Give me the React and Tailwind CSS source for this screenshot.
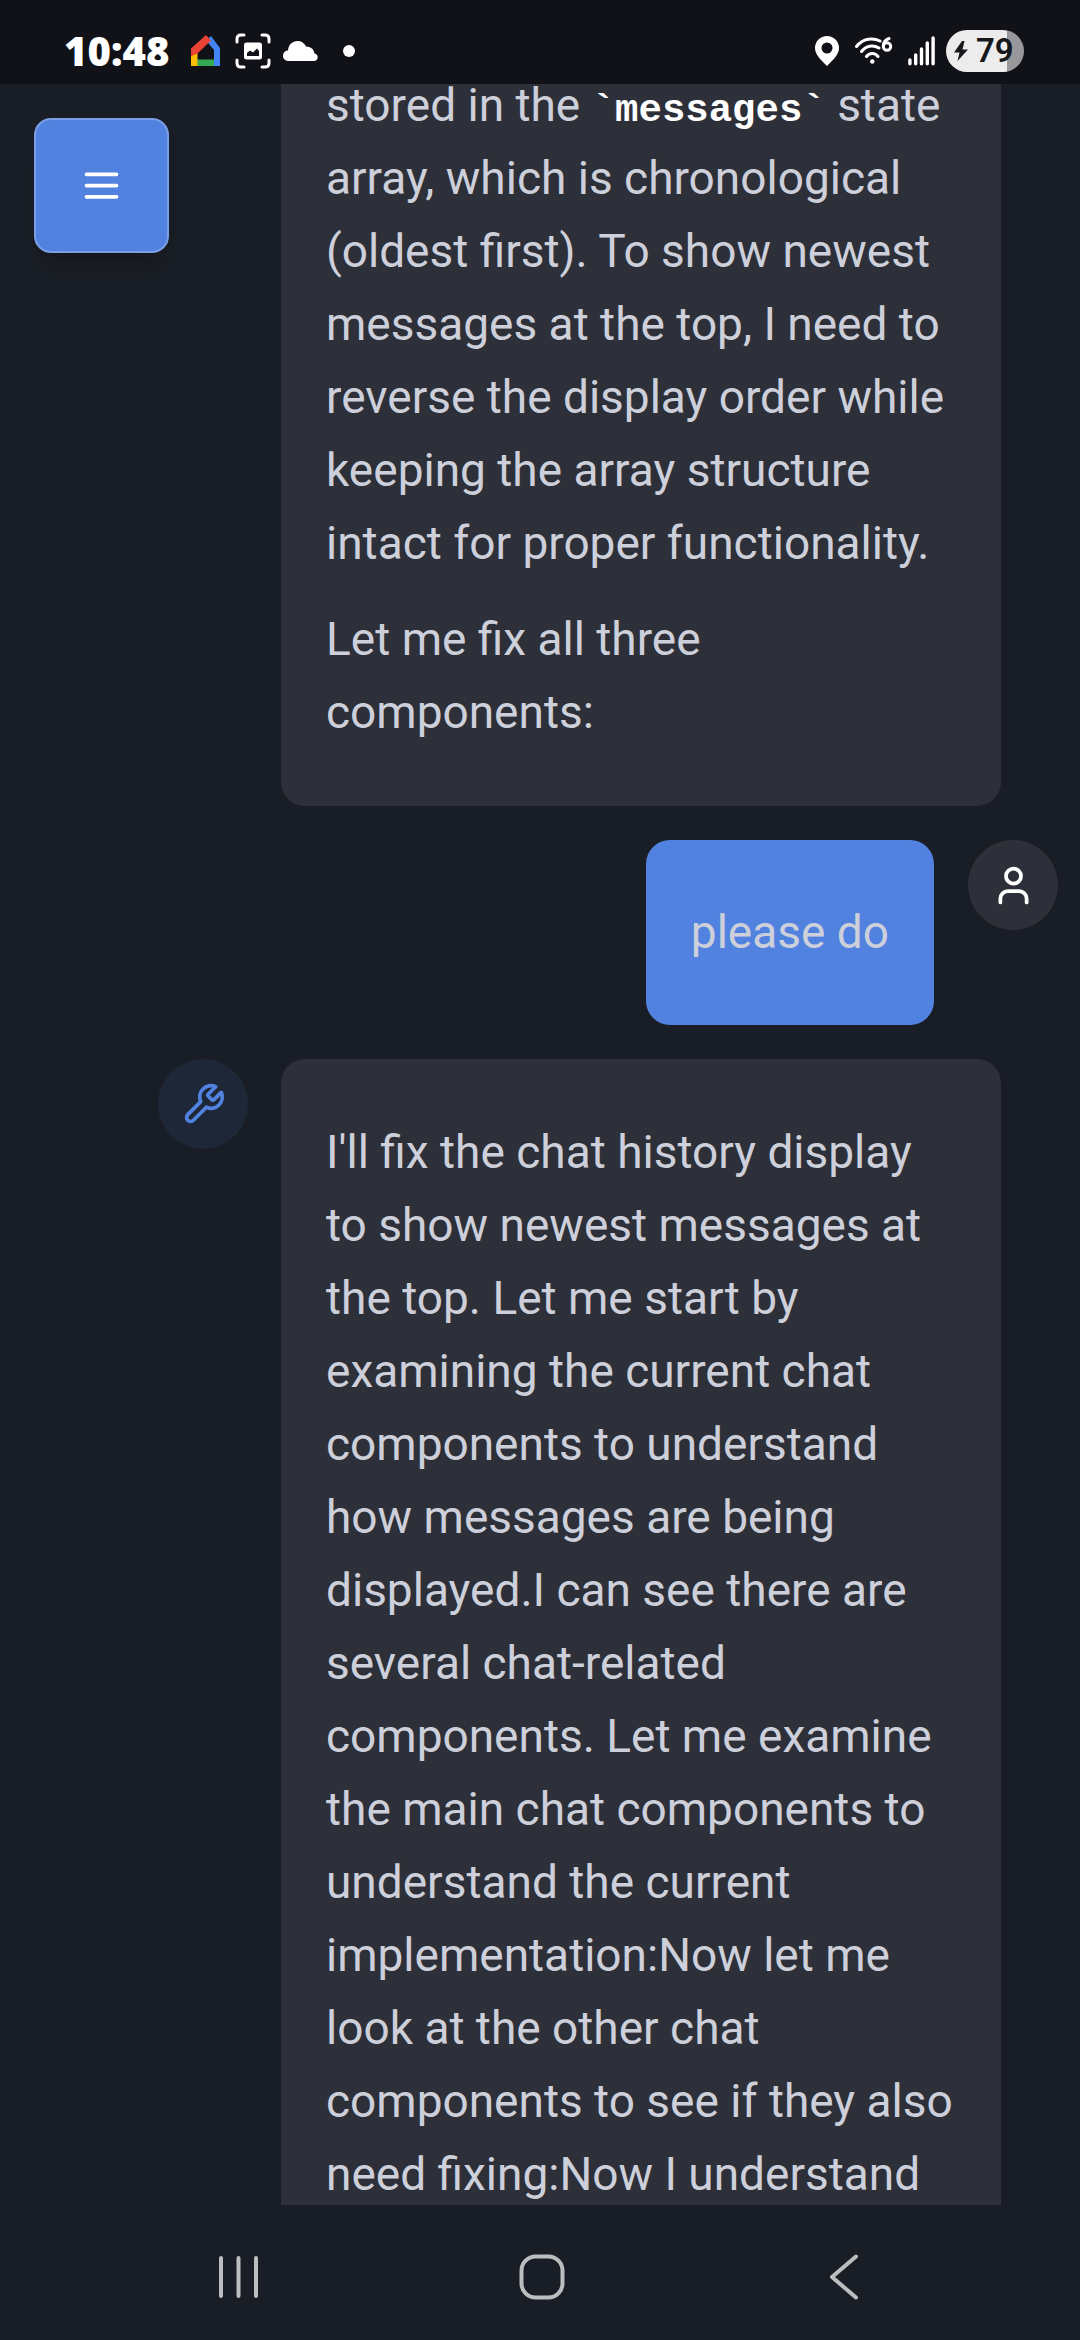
const INTRO = [
  [
    <>stored in the <code className="font-['Liberation_Mono',monospace] text-[39px] leading-none font-bold text-white">`messages`</code> state</>,
    "array, which is chronological",
    "(oldest first). To show newest",
    "messages at the top, I need to",
    "reverse the display order while",
    "keeping the array structure",
    "intact for proper functionality.",
  ],
  ["Let me fix all three", "components:"],
];

const REPLY = [
  [
    "I'll fix the chat history display",
    "to show newest messages at",
    "the top. Let me start by",
    "examining the current chat",
    "components to understand",
    "how messages are being",
    "displayed.I can see there are",
    "several chat-related",
    "components. Let me examine",
    "the main chat components to",
    "understand the current",
    "implementation:Now let me",
    "look at the other chat",
    "components to see if they also",
    "need fixing:Now I understand",
  ],
];

function StrokeIcon({ children, className = "" }) {
  return (
    <svg viewBox="0 0 24 24" fill="none" stroke="currentColor" strokeWidth="2" strokeLinecap="round" strokeLinejoin="round" className={`size-[45px] ${className}`} aria-hidden="true">
      {children}
    </svg>
  );
}

function Paragraphs({ items }) {
  return (
    <div className="flex flex-col gap-[23px]">
      {items.map((lines, i) => (
        <p key={i}>
          {lines.map((line, j) => (
            <span key={j} className="block whitespace-nowrap">{line}</span>
          ))}
        </p>
      ))}
    </div>
  );
}

function AssistantMessage({ items, avatar }) {
  return (
    <article className="flex shrink-0 items-start gap-[33px] pr-[79px] pl-[158px]">
      <div className="size-[90px] shrink-0">{avatar}</div>
      <div className="min-w-0 flex-1 rounded-3xl bg-[#2d3039] px-[45px] py-[57px]">
        <Paragraphs items={items} />
      </div>
    </article>
  );
}

function StatusBar() {
  return (
    <header className="z-10 flex h-[84px] shrink-0 items-center justify-between bg-[#111217] pt-[17px] pr-[56px] pl-[64px] text-white">
      <div className="flex items-center">
        <time className="w-[127px] font-['Open_Sans',sans-serif] text-[40px] leading-[50px] font-extrabold">10:48</time>
        <svg viewBox="0 0 30 32" className="h-8 w-[30px]" aria-hidden="true">
          <path d="M6 24.500H23V31H6Z" fill="#34a853" />
          <path d="M0 21 6.500 17.500V31H0Z" fill="#fbbc04" />
          <path d="M15 5.500 20 1 29 13V31H23V15Z" fill="#4285f4" />
          <path d="M0 21V13.500L15 0 20 5.500 6.500 18.500Z" fill="#ea4335" />
        </svg>
        <svg viewBox="0 0 36 36" className="ml-[14px] size-9" fill="none" stroke="white" strokeWidth="3" strokeLinecap="round" aria-hidden="true">
          <path d="M2 9V6Q2 2 6 2H9M27 2H30Q34 2 34 6V9M34 27V30Q34 34 30 34H27M9 34H6Q2 34 2 30V27" />
          <rect x="9" y="9.500" width="18" height="17" rx="2.500" fill="white" stroke="none" />
          <path d="M12 23V20L15 17.500 18 19.500 22 15.500 24 18V23Z" fill="#111217" stroke="none" />
        </svg>
        <svg viewBox="0 0 36 20" className="ml-3 h-5 w-9" fill="white" aria-hidden="true">
          <path d="M5 20A5 5 0 0 1 0 14.500 5 5 0 0 1 5 9.500C5.500 3.500 9.500 0 14.500 0 18.500 0 21.500 2 23 5.500 28 5.500 31 8.500 31.500 12.500A3.800 3.800 0 0 1 31.500 20Z" />
        </svg>
        <span className="ml-6 size-3 rounded-full bg-white" />
      </div>
      <div className="flex items-center">
        <svg viewBox="0 0 24 30" className="h-[30px] w-6" fill="white" fillRule="evenodd" aria-hidden="true">
          <path d="M12 0A12 12 0 0 1 24 12C24 18.500 18 24 12 30 6 24 0 18.500 0 12A12 12 0 0 1 12 0ZM12 6.500A5.500 5.500 0 1 0 12 17.500 5.500 5.500 0 1 0 12 6.500Z" />
        </svg>
        <svg viewBox="0 0 38 28" className="ml-4 h-7 w-[38px]" fill="none" stroke="white" strokeWidth="3" strokeLinecap="round" aria-hidden="true">
          <path d="M1.500 9.500C8 1 18 .500 25 4M6.500 14.500C11 8.500 18 7.500 24 11M11.500 19.500C14.500 15.500 20 15.500 23 19.500" />
          <circle cx="17.300" cy="24.500" r="2.200" fill="white" stroke="none" />
          <circle cx="32" cy="9.500" r="3.700" />
          <path d="M34 1.500C30 3 28.300 6 28.300 9" />
        </svg>
        <svg viewBox="0 0 27 30" className="ml-[15px] h-[30px] w-[27px]" fill="none" stroke="white" strokeWidth="3.400" strokeLinecap="round" aria-hidden="true">
          <path d="M1.900 24V27.800M7.700 19V27.800M13.500 13V27.800M19.300 7V27.800M25.100 2V27.800" />
        </svg>
        <div className="ml-[11px] flex h-[42px] w-[78px] items-center rounded-full bg-linear-to-r from-[#ececec] from-78% to-[#98989b] to-78% pl-2 text-[#17181c]">
          <svg viewBox="0 0 14 20" className="h-5 w-[14px]" fill="currentColor" aria-hidden="true">
            <path d="M8 0 0 11.500H5.500L3.500 20 14 8.500H8.500L10.500 0Z" />
          </svg>
          <span className="ml-2 font-['Roboto',sans-serif] text-[33px] leading-[42px] font-semibold">79</span>
        </div>
      </div>
    </header>
  );
}

function NavigationBar() {
  return (
    <nav className="flex h-[135px] shrink-0 items-center justify-between pt-[8px] pr-[204px] pl-[207px] text-[#bcbdbf]">
      <button type="button" aria-label="Recent apps" className="flex w-16 justify-center">
        <svg viewBox="0 0 42 42" className="size-[42px]" fill="none" stroke="currentColor" strokeWidth="4" strokeLinecap="round">
          <path d="M3 2V40M20.500 2V40M38 2V40" />
        </svg>
      </button>
      <button type="button" aria-label="Home" className="flex w-16 justify-center">
        <svg viewBox="0 0 46 46" className="size-[46px]" fill="none" stroke="currentColor" strokeWidth="4">
          <rect x="2.500" y="2.500" width="41" height="41" rx="14" />
        </svg>
      </button>
      <button type="button" aria-label="Back" className="flex w-16 justify-center">
        <svg viewBox="0 0 30 46" className="h-[46px] w-[30px]" fill="none" stroke="currentColor" strokeWidth="4" strokeLinecap="round" strokeLinejoin="round">
          <path d="M27 2.500 3 23 27 43.500" />
        </svg>
      </button>
    </nav>
  );
}

export default function App() {
  return (
    <div className="relative flex h-dvh flex-col overflow-hidden bg-[#191d25] font-['Roboto',sans-serif] text-[46px] leading-[73px] text-[#cdd0da]">
      <StatusBar />
      <button type="button" aria-label="Open menu" className="absolute top-[118px] left-[34px] z-10 flex size-[135px] items-center justify-center rounded-[17px] border-2 border-[#7b9fe6] bg-[#5282df] text-white shadow-xl">
        <StrokeIcon>
          <path d="M4 6h16M4 12h16M4 18h16" />
        </StrokeIcon>
      </button>
      <main className="min-h-0 flex-1 overflow-hidden">
        <div className="-mt-[72px] flex flex-col gap-[34px]">
          <AssistantMessage items={INTRO} />
          <article className="flex shrink-0 items-start justify-end gap-[34px] pr-[22px]">
            <div className="rounded-3xl bg-[#5282df] px-[45px] py-[56px]">
              <p>please do</p>
            </div>
            <div className="flex size-[90px] items-center justify-center rounded-full bg-[#2d3039] text-white">
              <StrokeIcon>
                <path d="M19 21v-2a4 4 0 0 0-4-4H9a4 4 0 0 0-4 4v2" />
                <circle cx="12" cy="7" r="4" />
              </StrokeIcon>
            </div>
          </article>
          <AssistantMessage
            items={REPLY}
            avatar={
              <div className="flex size-[90px] items-center justify-center rounded-full bg-[#1e2737] text-[#5282df]">
                <StrokeIcon>
                  <path d="M14.700 6.300a1 1 0 0 0 0 1.400l1.600 1.600a1 1 0 0 0 1.400 0l3.770-3.770a6 6 0 0 1-7.940 7.940l-6.910 6.910a2.120 2.120 0 0 1-3-3l6.910-6.910a6 6 0 0 1 7.940-7.940l-3.760 3.760z" />
                </StrokeIcon>
              </div>
            }
          />
        </div>
      </main>
      <NavigationBar />
    </div>
  );
}
